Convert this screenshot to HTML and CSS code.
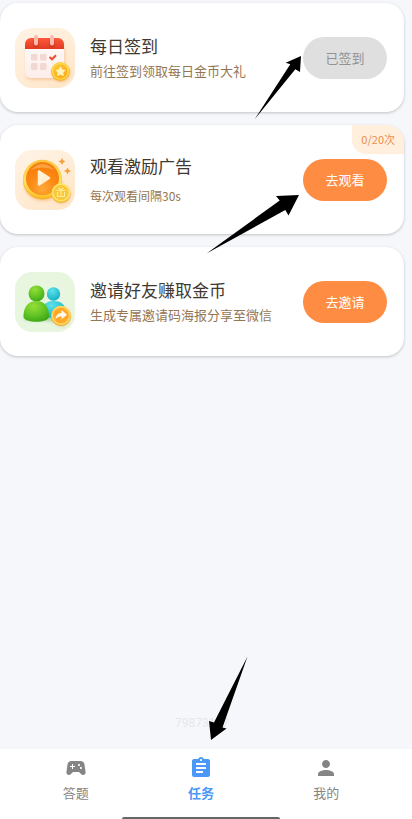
FILE: index.html
```html
<!DOCTYPE html>
<html lang="zh-CN">
<head>
<meta charset="utf-8">
<meta name="viewport" content="width=device-width, initial-scale=1">
<title>任务</title>
<link rel="stylesheet" href="styles.css">
</head>
<body>
<main class="tasks">
  <article class="card">
    <svg class="card-icon" viewBox="0 0 60 60" aria-hidden="true">
      <defs>
        <linearGradient id="peach" x1="0" y1="0" x2=".6" y2="1"><stop offset="0" stop-color="#fff3e6"/><stop offset="1" stop-color="#fee8cc"/></linearGradient>
        <linearGradient id="red" x1="0" y1="0" x2="0" y2="1"><stop offset="0" stop-color="#fb5a3c"/><stop offset="1" stop-color="#e23a22"/></linearGradient>
        <linearGradient id="sheet" x1="0" y1="0" x2="0" y2="1"><stop offset="0" stop-color="#fffaf8"/><stop offset="1" stop-color="#fdeeea"/></linearGradient>
        <radialGradient id="coin" cx=".4" cy=".35" r=".7"><stop offset="0" stop-color="#ffc935"/><stop offset="1" stop-color="#fba91c"/></radialGradient>
        <filter id="soft" x="-30%" y="-30%" width="160%" height="160%"><feGaussianBlur stdDeviation="1.5"/></filter>
      </defs>
      <rect width="60" height="60" rx="17" fill="url(#peach)"/>
      <rect x="11" y="17" width="39" height="35" rx="6" fill="#f3ab77" opacity=".5" filter="url(#soft)"/>
      <rect x="10" y="11" width="39" height="39" rx="6" fill="url(#sheet)"/>
      <path d="M10 21v-5a6 6 0 0 1 6-6h27a6 6 0 0 1 6 6v5z" fill="url(#red)"/>
      <path d="M21 14v3M37 14v3" stroke="#b92c18" stroke-width="6" stroke-linecap="round" opacity=".35"/>
      <path d="M21 9v6.500M37 9v6.500" stroke="#f9bcae" stroke-width="4" stroke-linecap="round"/>
      <g fill="#f1d8d3"><rect x="16" y="26" width="6.500" height="6.500" rx="1"/><rect x="25" y="26" width="6.500" height="6.500" rx="1"/><rect x="16" y="35" width="6.500" height="7" rx="1"/><rect x="25" y="35" width="6.500" height="7" rx="1"/></g>
      <path d="M34.500 29l2.500 2.300 4-4" fill="none" stroke="#ec4931" stroke-width="2"/>
      <circle cx="46" cy="45" r="9" fill="#da8a22" opacity=".4" filter="url(#soft)"/>
      <circle cx="45.500" cy="43.500" r="9.300" fill="#f5a916"/>
      <circle cx="45.500" cy="43" r="8.800" fill="#ffd84c"/>
      <circle cx="45.500" cy="43.500" r="7" fill="url(#coin)"/>
      <path d="M45.500 38.200l1.700 3.300 3.700.5-2.700 2.600.7 3.700-3.400-1.700-3.400 1.700.7-3.700-2.700-2.600 3.700-.5z" fill="#fff4bd"/>
    </svg>
    <div class="card-text">
      <h2 class="card-title">每日签到</h2>
      <p class="card-note">前往签到领取每日金币大礼</p>
    </div>
    <button class="action action-done" type="button" disabled>已签到</button>
  </article>

  <article class="card">
    <svg class="card-icon" viewBox="0 0 60 60" aria-hidden="true">
      <defs>
        <linearGradient id="gold" x1="0" y1="0" x2="0" y2="1"><stop offset="0" stop-color="#ffc443"/><stop offset=".55" stop-color="#ffe05c"/><stop offset="1" stop-color="#fbc02a"/></linearGradient>
        <radialGradient id="disc" cx=".5" cy=".8" r=".8"><stop offset="0" stop-color="#ffa83a"/><stop offset=".5" stop-color="#fc8a14"/><stop offset="1" stop-color="#f77a08"/></radialGradient>
        <linearGradient id="play" x1="0" y1="0" x2="1" y2="1"><stop offset="0" stop-color="#fffdf6"/><stop offset="1" stop-color="#ffe0a8"/></linearGradient>
      </defs>
      <rect width="60" height="60" rx="17" fill="url(#peach)"/>
      <ellipse cx="28" cy="35" rx="19" ry="16" fill="#f3a450" opacity=".5" filter="url(#soft)"/>
      <circle cx="27.500" cy="30" r="19.500" fill="#f5af20"/>
      <circle cx="27.500" cy="29" r="19.300" fill="url(#gold)"/>
      <circle cx="27.500" cy="28.500" r="16.500" fill="#f08a18"/>
      <circle cx="27.500" cy="29" r="16" fill="url(#disc)"/>
      <path d="M15.500 20q12-12 24 0q-12-5-24 0z" fill="#ffc878" opacity=".5"/>
      <path d="M24 21.500l10 6.500-10 6.500z" fill="url(#play)" stroke="#fff1d1" stroke-width="2.500" stroke-linejoin="round"/>
      <circle cx="46.500" cy="44.500" r="9" fill="#d68a20" opacity=".4" filter="url(#soft)"/>
      <circle cx="46" cy="43.500" r="9.500" fill="#f3b522"/>
      <circle cx="46" cy="42.500" r="9.300" fill="#ffe36c"/>
      <circle cx="46" cy="42.500" r="7.500" fill="#fac63a"/>
      <path d="M41.500 40.500h9M42.500 42v4.500h7V42M46 40v6.500M46 40l-2.500-2M46 40l2.500-2" fill="none" stroke="#ffec98" stroke-width="1.200"/>
      <path d="M47 8.500l.9 2.100 2.100.9-2.100.9-.9 2.100-.9-2.100-2.100-.9 2.100-.9zM52.500 18l.9 2.100 2.100.9-2.100.9-.9 2.100-.9-2.100-2.100-.9 2.100-.9z" fill="#f59b39" stroke="#f59b39" stroke-width=".5"/>
    </svg>
    <div class="card-text card-text-loose">
      <h2 class="card-title">观看激励广告</h2>
      <p class="card-note card-note-small">每次观看间隔30s</p>
    </div>
    <button class="action" type="button">去观看</button>
    <span class="badge">0/20次</span>
  </article>

  <article class="card">
    <svg class="card-icon" viewBox="0 0 60 60" aria-hidden="true">
      <defs>
        <radialGradient id="green" cx=".4" cy=".25" r=".8"><stop offset="0" stop-color="#95df38"/><stop offset=".6" stop-color="#5fc224"/><stop offset="1" stop-color="#3ba614"/></radialGradient>
        <radialGradient id="cyan" cx=".4" cy=".25" r=".8"><stop offset="0" stop-color="#5ce3e8"/><stop offset="1" stop-color="#12adc6"/></radialGradient>
      </defs>
      <rect width="60" height="60" rx="17" fill="#e8f6df"/>
      <path d="M9 48q0-8 10-8h25q5 0 5 10z" fill="#78b46a" opacity=".5" filter="url(#soft)"/>
      <circle cx="38.500" cy="22" r="6.700" fill="url(#cyan)"/>
      <path d="M26 45q0-16 12.500-16T51 42q-2 4-12 4z" fill="url(#cyan)"/>
      <circle cx="21.500" cy="21.500" r="8" fill="url(#green)"/>
      <path d="M8.500 44.500C8.500 35 13 29 21.500 29S34 35 34 44.500c0 7-25.500 7-25.500 0z" fill="url(#green)"/>
      <circle cx="46.500" cy="45.500" r="9" fill="#b68b2d" opacity=".4" filter="url(#soft)"/>
      <circle cx="46" cy="44" r="10" fill="#f7a51b"/>
      <circle cx="46" cy="43.500" r="9.700" fill="#ffd560"/>
      <circle cx="46" cy="43.500" r="7.800" fill="#ffa928"/>
      <path d="M40.500 47.500q.5-6.500 6-6.500V38l5.500 4.700-5.500 4.500v-3q-3.500 0-6 3.300z" fill="#fffaf0"/>
    </svg>
    <div class="card-text">
      <h2 class="card-title">邀请好友赚取金币</h2>
      <p class="card-note">生成专属邀请码海报分享至微信</p>
    </div>
    <button class="action" type="button">去邀请</button>
  </article>

  <p class="user-code">79873117</p>
</main>

<nav class="tabs">
  <a class="tab" href="#quiz">
    <svg class="tab-icon" viewBox="0 0 24 24" aria-hidden="true"><path fill="currentColor" d="M21.580 16.090l-1.090-7.660C20.210 6.460 18.520 5 16.530 5H7.470C5.480 5 3.790 6.460 3.510 8.430l-1.090 7.660C2.200 17.630 3.390 19 4.940 19c.68 0 1.320-.27 1.800-.75L9 16h6l2.250 2.250c.48.48 1.130.75 1.800.75 1.560 0 2.750-1.370 2.530-2.910zM11 11H9v2H8v-2H6v-1h2V8h1v2h2v1zm4-1c-.55 0-1-.45-1-1s.45-1 1-1 1 .45 1 1-.45 1-1 1zm2 3c-.55 0-1-.45-1-1s.45-1 1-1 1 .45 1 1-.45 1-1 1z"/></svg>
    <span>答题</span>
  </a>
  <a class="tab tab-active" href="#tasks" aria-current="page">
    <svg class="tab-icon" viewBox="0 0 24 24" aria-hidden="true"><path fill="currentColor" d="M19 3h-4.180C14.400 1.840 13.300 1 12 1c-1.300 0-2.400.84-2.820 2H5c-1.100 0-2 .9-2 2v14c0 1.100.9 2 2 2h14c1.100 0 2-.9 2-2V5c0-1.100-.9-2-2-2zm-7 0c.55 0 1 .45 1 1s-.45 1-1 1-1-.45-1-1 .45-1 1-1zm2 14H7v-2h7v2zm3-4H7v-2h10v2zm0-4H7V7h10v2z"/></svg>
    <span>任务</span>
  </a>
  <a class="tab" href="#me">
    <svg class="tab-icon" viewBox="0 0 24 24" aria-hidden="true"><path fill="currentColor" d="M12 12c2.210 0 4-1.790 4-4s-1.790-4-4-4-4 1.790-4 4 1.790 4 4 4zm0 2c-2.670 0-8 1.340-8 4v2h16v-2c0-2.660-5.330-4-8-4z"/></svg>
    <span>我的</span>
  </a>
  <span class="home-bar"></span>
</nav>

<svg class="arrows" width="412" height="819" viewBox="0 0 412 819" aria-hidden="true">
  <path d="M301 56L285.700 62.700L290.300 64.300L254.500 119.500L295.300 69.300L300 72z"/>
  <path d="M299 195L276 196L279.700 200.500L206.500 253.500L285.300 210L288.500 215.500z"/>
  <path d="M211 740L209 721L214 722.500L247.500 656.500L222.500 727.500L226.500 728.500z"/>
</svg>
</body>
</html>
```
FILE: styles.css
```css
* {
  box-sizing: border-box;
}

body {
  position: relative;
  display: flex;
  flex-direction: column;
  min-height: 100vh;
  margin: 0;
  background: #f6f7fa;
  font-family: "Noto Sans CJK SC", sans-serif;
}

h2,
p {
  margin: 0;
}

.tasks {
  display: flex;
  flex: 1;
  flex-direction: column;
  gap: 13px;
  padding: 3px 8px 16px 0;
}

.card {
  position: relative;
  display: flex;
  align-items: center;
  min-height: 109px;
  padding: 24px 17px 24px 15px;
  border-radius: 18px;
  background: #fff;
  box-shadow: 0 1px 3px rgba(0, 0, 0, 0.22);
}

.card-icon {
  flex: none;
  width: 60px;
  height: 60px;
}

.card-text {
  display: flex;
  flex: 1;
  flex-direction: column;
  gap: 3px;
  min-width: 0;
  padding-left: 15px;
}

.card-text-loose {
  gap: 8px;
}

.card-title {
  color: #3f3931;
  font-size: 17px;
  font-weight: 400;
  line-height: 24px;
}

.card-note {
  color: #957653;
  font-size: 13px;
  line-height: 20px;
  white-space: nowrap;
}

.card-note-small {
  font-size: 12px;
}

.action {
  flex: none;
  width: 84px;
  height: 42px;
  padding: 0;
  border: 0;
  border-radius: 21px;
  background: #ff8c43;
  color: #fff;
  font: inherit;
  font-size: 13px;
}

.action-done {
  background: #dfdfdf;
  color: #929292;
}

.badge {
  position: absolute;
  top: 0;
  right: 0;
  padding: 0 9px;
  border-radius: 0 18px 0 14px;
  background: #ffefdc;
  color: #eb8d4e;
  font-size: 11px;
  line-height: 29px;
}

.user-code {
  margin-top: auto;
  color: #e6e7ea;
  font-family: Roboto, sans-serif;
  font-size: 12px;
  line-height: 20px;
  text-align: center;
}

.tabs {
  position: relative;
  display: flex;
  height: 70px;
  padding: 7px 23px 0 13px;
  background: #fff;
}

.tab {
  display: flex;
  flex: 1;
  flex-direction: column;
  align-items: center;
  color: #858585;
  font-size: 13px;
  line-height: 20px;
  text-decoration: none;
}

.tab-icon {
  width: 24px;
  height: 24px;
  margin-bottom: 3px;
}

.tab-active {
  color: #4a98f8;
  font-weight: 700;
}

.home-bar {
  position: absolute;
  bottom: 0;
  left: 122px;
  width: 158px;
  height: 2px;
  border-radius: 2px 2px 0 0;
  background: #666;
}

.arrows {
  position: absolute;
  top: 0;
  left: 0;
  pointer-events: none;
}
```
